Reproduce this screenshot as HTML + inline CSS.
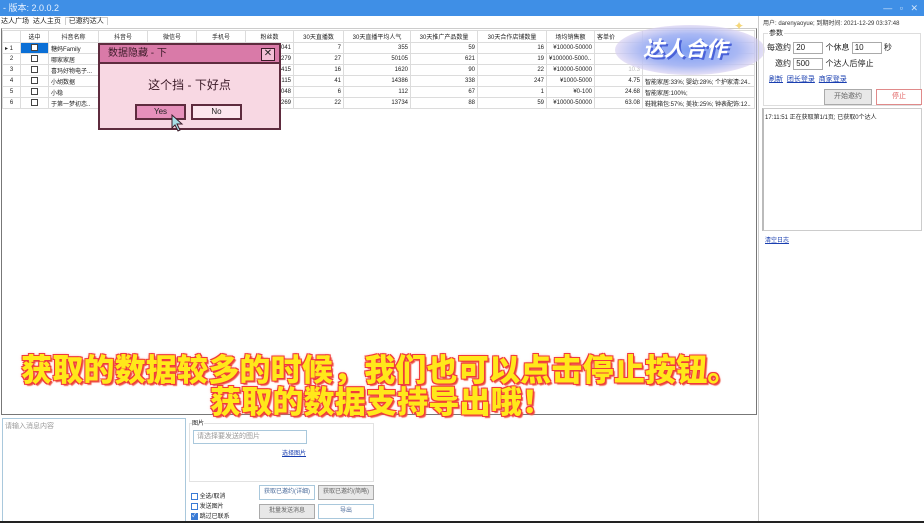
<!DOCTYPE html>
<html><head><meta charset="utf-8"><style>
*{box-sizing:border-box;margin:0;padding:0}
body{width:924px;height:523px;overflow:hidden;background:#fff;font-family:"Liberation Sans","Noto Sans CJK SC",sans-serif;font-size:7px;color:#222;position:relative}
.a{position:absolute}
.title{left:0;top:0;width:924px;height:16px;background:#3f8fe6;color:#e8f2ff;font-size:9px;line-height:16px;padding-left:3px}
.tabs{top:16px;left:0;height:12px;font-size:7px;line-height:12px}
table{border-collapse:collapse;font-size:6px}
td{border:1px solid #dcdcdc;height:11px;padding:0 2px;white-space:nowrap;overflow:hidden}
.r{text-align:right}.c{text-align:center}
.cb{display:inline-block;width:7px;height:7px;border:1px solid #444;vertical-align:middle}
.btn{border:1px solid #aaa;background:#e8e8e8;text-align:center;font-size:6px;color:#666}
.link{color:#1a3fb0;text-decoration:underline}
.cap{font-weight:900;color:#ffe81a;font-size:31px;line-height:31px;letter-spacing:0.2px;text-shadow:-1px -1px 0 #f03a3a,1px -1px 0 #f03a3a,-1px 1px 0 #f03a3a,1px 1px 0 #f03a3a,2px 2px 1px #e54,0 0 3px #f66;font-family:"Noto Sans CJK SC",sans-serif;white-space:nowrap}
</style></head><body>
<div class="a title">- 版本: 2.0.0.2<span style="position:absolute;right:6px;top:0;color:#cfe3fa">—&nbsp;&nbsp;&nbsp;▫&nbsp;&nbsp;&nbsp;✕</span></div>
<div class="a tabs" style="left:1px">达人广场&nbsp;&nbsp;达人主页&nbsp;&nbsp;<span style="background:#fff;border:1px solid #ccc;border-bottom:none;padding:0 3px">已邀约达人</span></div>
<div class="a" style="left:1px;top:28px;width:756px;height:387px;border:1px solid #777;border-top-color:#ccc"></div>
<div class="a" style="left:2px;top:30px;width:753px">
<table style="width:753px;table-layout:fixed">
<colgroup><col style="width:18px"><col style="width:28px"><col style="width:50px"><col style="width:49px"><col style="width:49px"><col style="width:49px"><col style="width:48px"><col style="width:50px"><col style="width:67px"><col style="width:67px"><col style="width:69px"><col style="width:48px"><col style="width:48px"><col></colgroup>
<tr style="background:#fff"><td style="height:12px"></td><td class="c">选中</td><td class="c">抖音名称</td><td class="c">抖音号</td><td class="c">微信号</td><td class="c">手机号</td><td class="c">粉丝数</td><td class="c">30天直播数</td><td class="c">30天直播平均人气</td><td class="c">30天推广产品数量</td><td class="c">30天合作店铺数量</td><td class="c">场均销售额</td><td>客单价</td><td></td></tr>
<tr><td>▸ 1</td><td class="c" style="background:#0a6fd6"><span class="cb" style="background:#fff"></span></td><td>糖妈Family</td><td></td><td></td><td></td><td class="r">041</td><td class="r">7</td><td class="r">355</td><td class="r">59</td><td class="r">16</td><td class="r">¥10000-50000</td><td></td><td></td></tr>
<tr><td class="c">2</td><td class="c"><span class="cb"></span></td><td>哪家家居</td><td></td><td></td><td></td><td class="r">279</td><td class="r">27</td><td class="r">50105</td><td class="r">621</td><td class="r">19</td><td>¥100000-5000..</td><td></td><td></td></tr>
<tr><td class="c">3</td><td class="c"><span class="cb"></span></td><td>喜玛好物电子...</td><td></td><td></td><td></td><td class="r">415</td><td class="r">16</td><td class="r">1620</td><td class="r">90</td><td class="r">22</td><td class="r">¥10000-50000</td><td class="r" style="color:#bbb">10.3</td><td></td></tr>
<tr><td class="c">4</td><td class="c"><span class="cb"></span></td><td>小胡数据</td><td></td><td></td><td></td><td class="r">115</td><td class="r">41</td><td class="r">14386</td><td class="r">338</td><td class="r">247</td><td class="r">¥1000-5000</td><td class="r">4.75</td><td>智能家居:33%; 婴幼:28%; 个护家清:24..</td></tr>
<tr><td class="c">5</td><td class="c"><span class="cb"></span></td><td>小稳</td><td></td><td></td><td></td><td class="r">048</td><td class="r">6</td><td class="r">112</td><td class="r">67</td><td class="r">1</td><td class="r">¥0-100</td><td class="r">24.68</td><td>智能家居:100%;</td></tr>
<tr><td class="c">6</td><td class="c"><span class="cb"></span></td><td>于第一梦初恋..</td><td></td><td></td><td></td><td class="r">269</td><td class="r">22</td><td class="r">13734</td><td class="r">88</td><td class="r">59</td><td class="r">¥10000-50000</td><td class="r">63.08</td><td>鞋靴箱包:57%; 美妆:25%; 钟表配饰:12..</td></tr>
</table></div>

<!-- dialog -->
<div class="a" style="left:98px;top:43px;width:183px;height:87px;background:#f8d8e3;border:2px solid #5e2b3e">
<div style="height:19px;background:#d97aa8;border-bottom:2px solid #5e2b3e;font-size:10px;line-height:17px;padding-left:8px;color:#3b1a28">数据隐藏 - 下</div>
<div class="a" style="right:4px;top:3px;width:14px;height:13px;border:1.5px solid #3b1a28;font-size:10px;line-height:10px;text-align:center;background:#f3c0d6">✕</div>
<div style="text-align:center;font-size:12px;margin-top:12px;color:#3b1a28">这个挡 - 下好点</div>
<div class="a" style="left:35px;top:59px;width:51px;height:16px;background:#e690bb;border:2px solid #5e2b3e;font-size:8px;text-align:center;line-height:12px">Yes</div>
<div class="a" style="left:91px;top:59px;width:51px;height:16px;background:#fbe6ee;border:2px solid #5e2b3e;font-size:8px;text-align:center;line-height:12px">No</div>
<svg class="a" style="left:70px;top:69px" width="14" height="18"><path d="M2 1 L2 14 L5 11 L8 17 L10 16 L7 10 L12 10 Z" fill="#a8e0e8" stroke="#3b1a28" stroke-width="1"/></svg>
</div>

<!-- badge -->
<div class="a" style="left:615px;top:25px;width:150px;height:50px;border-radius:50%;background:radial-gradient(ellipse at center,#7b9cf2 0%,#a9b8f4 45%,rgba(230,215,240,0.6) 75%,rgba(255,255,255,0) 100%)"></div>
<div class="a" style="left:643px;top:33px;font-size:21px;font-weight:bold;color:#fff;font-style:italic;text-shadow:2px 2px 0 #4a62d8;font-family:'Noto Sans CJK SC',sans-serif">达人合作</div>
<div class="a" style="left:734px;top:19px;color:#f5d77a;font-size:12px">✦</div>

<!-- right panel -->
<div class="a" style="left:763px;top:18px;font-size:6px;color:#333">用户: darenyaoyue; 到期时间: 2021-12-29 03:37:48</div>
<div class="a" style="left:763px;top:33px;width:158px;height:73px;border:1px solid #ddd"></div>
<div class="a" style="left:768px;top:28px;background:#fff;font-size:7px;padding:0 1px">参数</div>
<div class="a" style="left:767px;top:42px;font-size:8px">每邀约 <span style="display:inline-block;width:30px;height:12px;border:1px solid #aaa;vertical-align:middle;padding-left:2px;line-height:10px">20</span> 个休息 <span style="display:inline-block;width:30px;height:12px;border:1px solid #aaa;vertical-align:middle;padding-left:2px;line-height:10px">10</span> 秒</div>
<div class="a" style="left:775px;top:58px;font-size:8px">邀约 <span style="display:inline-block;width:30px;height:12px;border:1px solid #aaa;vertical-align:middle;padding-left:2px;line-height:10px">500</span> 个达人后停止</div>
<div class="a" style="left:769px;top:74px;font-size:7px"><span class="link">刷新</span>&nbsp; <span class="link">团长登录</span>&nbsp; <span class="link">商家登录</span></div>
<div class="a btn" style="left:824px;top:89px;width:48px;height:16px;line-height:14px;font-size:7px">开始邀约</div>
<div class="a" style="left:876px;top:89px;width:46px;height:16px;border:1px solid #e08a8a;background:#fff;color:#e06060;text-align:center;line-height:14px;font-size:7px">停止</div>
<div class="a" style="left:762px;top:108px;width:160px;height:123px;border:1px solid #ccc;border-left:2px solid #bbb;font-size:6px;padding:3px 1px">17:11:51 正在获取第1/1页; 已获取0个达人</div>
<div class="a link" style="left:765px;top:235px;font-size:6px">清空日志</div>
<div class="a" style="left:758px;top:16px;width:1px;height:507px;background:#ccc"></div>

<!-- caption -->
<div class="a cap" style="left:21px;top:352px">获取的数据较多的时候，我们也可以点击停止按钮。</div>
<div class="a cap" style="left:210px;top:384px">获取的数据支持导出哦！</div>

<!-- bottom -->
<div class="a" style="left:2px;top:418px;width:184px;height:104px;border:1px solid #a9c8dc;color:#999;font-size:7px;padding:2px">请输入消息内容</div>
<div class="a" style="left:189px;top:423px;width:185px;height:59px;border:1px solid #e2e2e2"></div>
<div class="a" style="left:192px;top:418px;background:#fff;font-size:6px">图片</div>
<div class="a" style="left:193px;top:430px;width:114px;height:14px;border:1px solid #a9c8dc;color:#999;font-size:7px;line-height:12px;padding-left:3px">请选择要发送的图片</div>
<div class="a link" style="left:282px;top:448px;font-size:6px">选择图片</div>
<div class="a" style="left:191px;top:492px;font-size:6px;line-height:10px">
<div><span class="cb" style="border-color:#3a7bd5"></span> 全选/取消</div>
<div><span class="cb" style="border-color:#3a7bd5"></span> 发送图片</div>
<div><span class="cb" style="background:#3a7bd5;border-color:#3a7bd5;color:#fff;font-size:6px;line-height:5px">✓</span> 跳过已联系</div></div>
<div class="a" style="left:259px;top:485px;width:56px;height:15px;border:1px solid #a9c8dc;background:#fff;font-size:6px;color:#4a6a9a;text-align:center;line-height:13px">获取已邀约(详细)</div>
<div class="a btn" style="left:318px;top:485px;width:56px;height:15px;line-height:13px">获取已邀约(简略)</div>
<div class="a btn" style="left:259px;top:504px;width:56px;height:15px;line-height:13px">批量发送消息</div>
<div class="a" style="left:318px;top:504px;width:56px;height:15px;border:1px solid #a9c8dc;background:#fff;font-size:6px;color:#4a6a9a;text-align:center;line-height:13px">导出</div>
<div class="a" style="left:0;top:521px;width:924px;height:2px;background:#222"></div>
</body></html>
